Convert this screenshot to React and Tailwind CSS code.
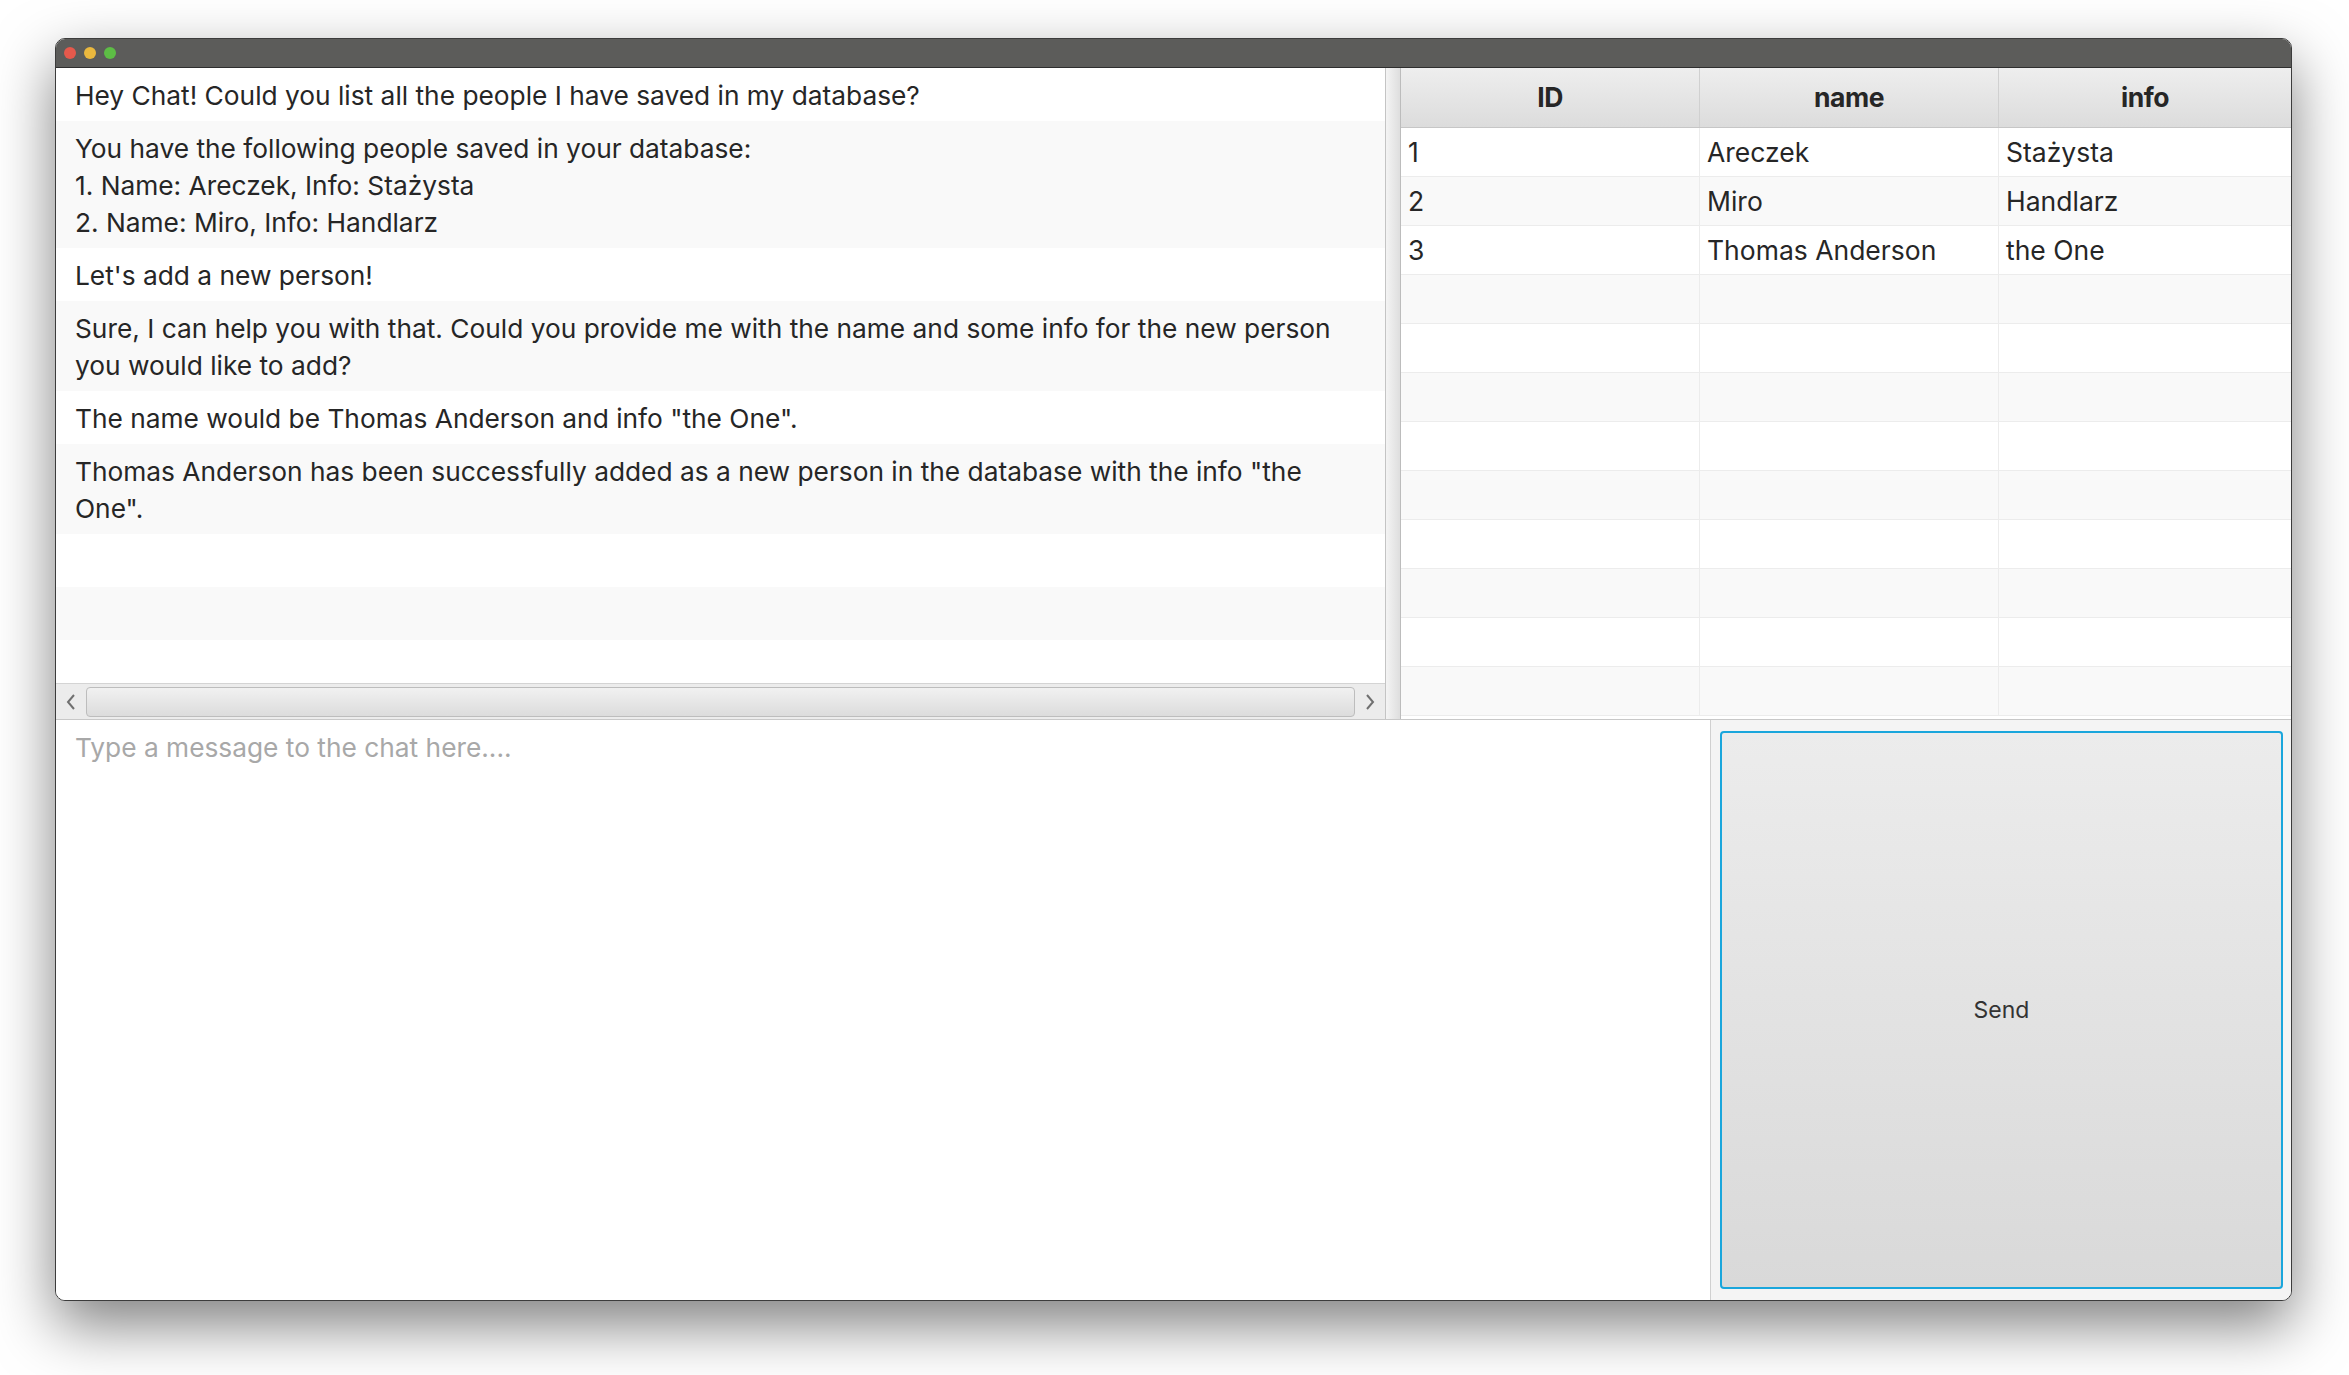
import React from "react";

const messages = [
  ["Hey Chat! Could you list all the people I have saved in my database?"],
  [
    "You have the following people saved in your database:",
    "1. Name: Areczek, Info: Stażysta",
    "2. Name: Miro, Info: Handlarz",
  ],
  ["Let's add a new person!"],
  [
    "Sure, I can help you with that. Could you provide me with the name and some info for the new person",
    "you would like to add?",
  ],
  ['The name would be Thomas Anderson and info "the One".'],
  [
    'Thomas Anderson has been successfully added as a new person in the database with the info "the',
    'One".',
  ],
];

const people = [
  ["1", "Areczek", "Stażysta"],
  ["2", "Miro", "Handlarz"],
  ["3", "Thomas Anderson", "the One"],
];

export default function App() {
  const tableRows = Array.from({ length: 12 }, (_, i) => people[i] || ["", "", ""]);
  return (
    <div
      className="w-[2349px] h-[1375px] bg-white pl-[55px] pt-[38px] overflow-hidden"
      style={{ fontFamily: "Inter, 'Noto Sans', sans-serif" }}
    >
      <div className="w-[2237px] h-[1263px] rounded-[10px] border border-[#3c3c3c] shadow-[0_24px_60px_rgba(0,0,0,0.5)] overflow-hidden flex flex-col bg-white">
        {/* title bar */}
        <div className="h-[29px] shrink-0 bg-[#5c5c5a] border-b border-[#2e2e2e] flex items-center gap-[8px] pl-[8px]">
          <div className="w-[12px] h-[12px] rounded-full bg-[#e5594c]" />
          <div className="w-[12px] h-[12px] rounded-full bg-[#eab83e]" />
          <div className="w-[12px] h-[12px] rounded-full bg-[#5dbd45]" />
        </div>

        {/* top area */}
        <div className="h-[652px] shrink-0 flex border-b border-[#c8c8c8]">
          {/* chat pane */}
          <div className="w-[1330px] shrink-0 flex flex-col border-r border-[#c4c4c4]">
            <div className="flex-1 overflow-hidden flex flex-col text-[26.3px] leading-[37px] text-[#262626]">
              {messages.map((m, i) => (
                <div
                  key={i}
                  className={`px-[19px] pt-[9px] pb-[7px] shrink-0 ${i % 2 ? "bg-[#f9f9f9]" : "bg-white"}`}
                >
                  {m.map((l, j) => (
                    <div key={j} className="whitespace-nowrap">{l}</div>
                  ))}
                </div>
              ))}
              {[6, 7, 8].map((i) => (
                <div
                  key={i}
                  className={`h-[53px] shrink-0 ${i % 2 ? "bg-[#f9f9f9]" : "bg-white"}`}
                />
              ))}
            </div>
            {/* horizontal scrollbar */}
            <div className="h-[36px] shrink-0 bg-[#ececec] border-t border-[#d4d4d4] flex items-center">
              <div className="w-[30px] h-full flex items-center justify-center">
                <svg width="10" height="16" viewBox="0 0 10 16">
                  <path d="M8 1 L2 8 L8 15" fill="none" stroke="#707070" strokeWidth="2" />
                </svg>
              </div>
              <div className="flex-1 h-[30px] rounded-[4px] border border-[#bdbdbd] bg-gradient-to-b from-[#f1f1f1] to-[#dcdcdc]" />
              <div className="w-[30px] h-full flex items-center justify-center">
                <svg width="10" height="16" viewBox="0 0 10 16">
                  <path d="M2 1 L8 8 L2 15" fill="none" stroke="#707070" strokeWidth="2" />
                </svg>
              </div>
            </div>
          </div>

          {/* divider */}
          <div className="w-[15px] shrink-0 bg-gradient-to-r from-[#f4f4f4] to-[#dedede] border-r border-[#bcbcbc]" />

          {/* table */}
          <div className="flex-1 flex flex-col overflow-hidden">
            <div className="h-[60px] shrink-0 flex bg-gradient-to-b from-[#eeeeee] to-[#dcdcdc] border-b border-[#c6c6c6] text-[26.5px] font-bold text-[#262626] tracking-[-0.5px]">
              <div className="w-[299px] flex items-center justify-center border-r border-[#d0d0d0]">ID</div>
              <div className="w-[299px] flex items-center justify-center border-r border-[#d0d0d0]">name</div>
              <div className="flex-1 flex items-center justify-center">info</div>
            </div>
            {tableRows.map((r, i) => (
              <div
                key={i}
                className={`h-[49px] shrink-0 flex border-b border-[#ececec] text-[26.5px] leading-[37px] text-[#262626] ${i % 2 ? "bg-[#f9f9f9]" : "bg-white"}`}
              >
                <div className="w-[299px] pl-[7px] flex items-center border-r border-[#ececec]">{r[0]}</div>
                <div className="w-[299px] pl-[7px] flex items-center border-r border-[#ececec] whitespace-nowrap">{r[1]}</div>
                <div className="flex-1 pl-[7px] flex items-center">{r[2]}</div>
              </div>
            ))}
          </div>
        </div>

        {/* bottom area */}
        <div className="flex-1 flex">
          <div className="w-[1655px] shrink-0 bg-white border-r border-[#d0d0d0] pl-[19px] pt-[9px] text-[26.3px] leading-[37px] text-[#a8a8a8]">
            Type a message to the chat here....
          </div>
          <div className="flex-1 bg-[#f4f4f4] pl-[9px] pr-[8px] py-[11px] flex">
            <div className="flex-1 rounded-[4px] border-2 border-[#1aa6dc] bg-gradient-to-b from-[#ececec] to-[#d9d9d9] flex items-center justify-center text-[23px] text-[#333333]">
              Send
            </div>
          </div>
        </div>
      </div>
    </div>
  );
}
